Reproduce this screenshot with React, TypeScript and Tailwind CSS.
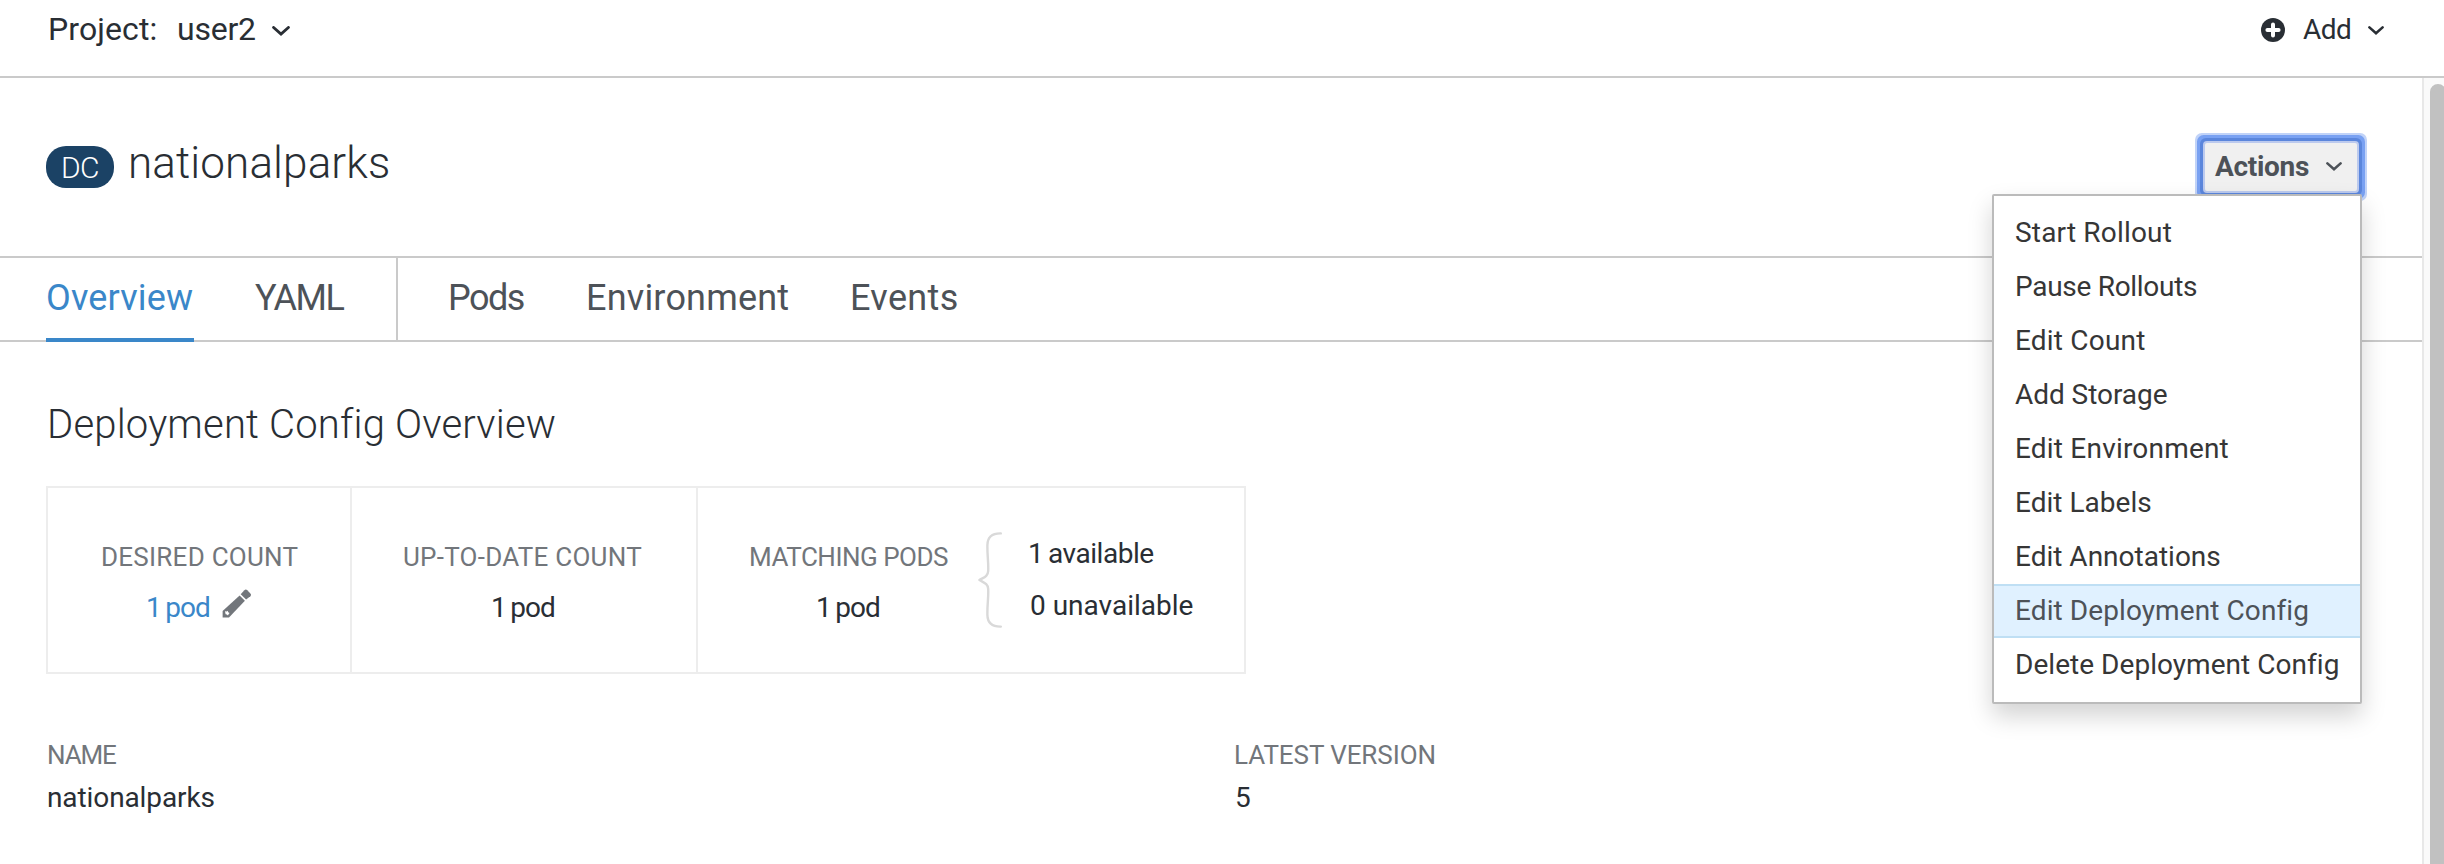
import type { ReactNode } from 'react';

function Chevron({ className }: { className: string }) {
  return (
    <svg viewBox="0 0 18 10" className={className} fill="none" stroke="currentColor" strokeWidth="2.9" strokeLinecap="round" strokeLinejoin="miter">
      <path d="M1.6 1.5 9 8 16.4 1.5" />
    </svg>
  );
}

function PlusCircle() {
  return (
    <svg viewBox="0 0 24 24" className="mt-[18px] h-6 w-6">
      <circle cx="12" cy="12" r="12" fill="#292e34" />
      <path d="M12 6.4v11.2M6.4 12h11.2" stroke="#fff" strokeWidth="4" strokeLinecap="round" />
    </svg>
  );
}

function Pencil() {
  return (
    <svg viewBox="0 0 29 29" className="mt-[1px] h-[29px] w-[29px]" fill="#72767b">
      <path d="M17.6 6.6 22.9 11.7 7 28.6H.6V22Z" />
      <path d="M18.7 5.3 22.4 1.3q1.4-1.4 2.9 0L28.4 4.4q1.2 1.4 0 2.9L24.1 10.6Z" />
      <path d="M3 22.2 4.8 22.6 5.7 21.8 6.2 23.2 7.6 24 6.6 25.2 6 26.6 4.8 25.6 3.6 25.2Z" fill="#fff" />
    </svg>
  );
}

function Brace() {
  return (
    <svg viewBox="0 0 24 96" className="mt-11 h-24 w-6" fill="none" stroke="#d9d9d9" strokeWidth="2.4" strokeLinecap="round" strokeLinejoin="round">
      <path d="M22.8 1.4C14 1.2 9.6 4.5 9.4 13C9.2 25 10.6 29 10.2 39C10 44.5 5.5 45.5 1.4 48C5.5 50.5 10 51.5 10.2 57C10.6 67 9.2 71 9.4 83C9.6 91.5 14 94.8 22.8 94.6" />
    </svg>
  );
}

const menuItems = [
  { label: 'Start Rollout', tracking: 'tracking-[0.18px]' },
  { label: 'Pause Rollouts', tracking: 'tracking-[-0.29px]' },
  { label: 'Edit Count', tracking: 'tracking-[0.2px]' },
  { label: 'Add Storage', tracking: 'tracking-[-0.05px]' },
  { label: 'Edit Environment', tracking: 'tracking-[0.2px]' },
  { label: 'Edit Labels', tracking: 'tracking-[0.02px]' },
  { label: 'Edit Annotations', tracking: 'tracking-normal' },
  { label: 'Edit Deployment Config', tracking: 'tracking-[0.09px]', active: true },
  { label: 'Delete Deployment Config', tracking: 'tracking-[0.04px]' },
];

function ActionsMenu() {
  return (
    <ul className="absolute top-[51px] -right-[5px] z-10 h-[510px] w-[370px] rounded-[2px] border-2 border-[#bbbbbb] bg-white py-[10px] shadow-[0_12px_24px_rgba(0,0,0,0.175)]">
      {menuItems.map((item) => (
        <li
          key={item.label}
          className={`h-[54px] border-y-2 pl-[21px] text-[28px] leading-[49px] whitespace-nowrap ${item.tracking} ${
            item.active ? 'border-[#bfdff4] bg-[#e0f1ff] text-[#4d5258]' : 'border-transparent text-[#363636]'
          }`}
        >
          {item.label}
        </li>
      ))}
    </ul>
  );
}

function Label({ children, className }: { children: ReactNode; className: string }) {
  return <div className={`text-[26px] leading-10 whitespace-nowrap text-[#72767b] ${className}`}>{children}</div>;
}

function PodCount({ className }: { className: string }) {
  return (
    <span className={`text-[28px] leading-10 tracking-[-1px] whitespace-nowrap [word-spacing:-1.4px] ${className}`}>1 pod</span>
  );
}

export default function App() {
  return (
    <div className="flex h-[864px] w-[2444px] flex-col overflow-hidden bg-white font-['Roboto',sans-serif] text-[#292e34]">
      <header className="flex h-[78px] shrink-0 items-start justify-between border-b-2 border-[#cacaca] pr-[60px] pl-12">
        <div className="flex text-[32px] leading-[58px]">
          <span className="w-[129px] tracking-[0.1px]">Project:</span>
          <span className="w-[95px] tracking-[-0.24px]">user2</span>
          <Chevron className="mt-[26px] h-[10px] w-[18px]" />
        </div>
        <div className="flex text-[28px] leading-[60px]">
          <PlusCircle />
          <span className="ml-[18px] w-[65px] tracking-[-0.53px]">Add</span>
          <Chevron className="mt-[26px] h-[9px] w-4" />
        </div>
      </header>

      <div className="flex min-h-0 flex-1">
        <main className="w-[2422px] shrink-0">
          <div className="flex h-[178px] items-start pt-16 pr-[65px] pl-[46px]">
            <span className="mt-1 h-[42px] w-[68px] rounded-[20px] bg-[#1b4265] text-center text-[30px] leading-[43px] font-light tracking-[-0.66px] text-white">
              DC
            </span>
            <h1 className="ml-[14px] text-[44px] leading-[42px] font-light tracking-[0.12px]">nationalparks</h1>
            <div className="relative mt-px ml-auto">
              <button className="flex h-12 w-[152px] rounded-[2px] bg-[#f0f0f0] pl-[10px] text-[28px] leading-[47px] font-bold tracking-[-0.3px] text-[#4d5258] shadow-[0_0_0_2px_#bccaee,0_0_0_5px_#5b86dc,0_0_0_8px_#79a1f2,0_0_0_10px_#c1d3f8]">
                <span className="w-[111px] text-left">Actions</span>
                <Chevron className="mt-[19px] h-[9px] w-4" />
              </button>
              <ActionsMenu />
            </div>
          </div>

          <nav className="flex h-[86px] border-y-2 border-[#cacaca] pl-[46px] text-[36px] leading-[80px] text-[#4d5258]">
            <div className="flex w-[352px] border-r-2 border-[#cacaca]">
              <a className="h-[84px] w-[148px] border-b-4 border-[#3a87c9] tracking-[0.16px] text-[#3a87c9]">Overview</a>
              <a className="ml-[61px] tracking-[-1.5px]">YAML</a>
            </div>
            <a className="ml-[50px] w-[138px] tracking-[-1.5px]">Pods</a>
            <a className="w-[264px] tracking-[0.2px]">Environment</a>
            <a className="tracking-[0.35px]">Events</a>
          </nav>

          <section className="px-[46px] pt-[58px]">
            <h2 className="pl-px text-[40px] leading-[50px] font-light tracking-[0.19px]">Deployment Config Overview</h2>

            <div className="mt-9 flex h-[188px] w-[1200px] border-2 border-[#ededed]">
              <div className="w-[304px] border-r-2 border-[#ededed] pt-[49px]">
                <Label className="pl-[53px] tracking-[0.25px]">DESIRED COUNT</Label>
                <div className="mt-[11px] flex pl-[98px]">
                  <PodCount className="w-[76px] text-[#3a87c9]" />
                  <Pencil />
                </div>
              </div>
              <div className="w-[346px] border-r-2 border-[#ededed] pt-[49px]">
                <Label className="pl-[51px] tracking-[0.25px]">UP-TO-DATE COUNT</Label>
                <div className="mt-[11px] flex pl-[139px]">
                  <PodCount className="" />
                </div>
              </div>
              <div className="flex flex-1">
                <div className="w-[280px] pt-[49px]">
                  <Label className="pl-[51px] tracking-[-0.5px]">MATCHING PODS</Label>
                  <div className="mt-[11px] flex pl-[118px]">
                    <PodCount className="" />
                  </div>
                </div>
                <Brace />
                <div className="ml-[26px] pt-10 text-[28px] leading-[52px] whitespace-nowrap">
                  <div className="tracking-[-0.45px] [word-spacing:-1.8px]">1 available</div>
                  <div className="pl-[2px]">0 unavailable</div>
                </div>
              </div>
            </div>

            <dl className="mt-[61px] flex">
              <div className="w-[1188px]">
                <Label className="pl-px tracking-[-1.15px]">NAME</Label>
                <dd className="mt-[3px] pl-px text-[28px] leading-10 tracking-[-0.1px]">nationalparks</dd>
              </div>
              <div>
                <Label className="tracking-[-0.08px]">LATEST VERSION</Label>
                <dd className="mt-[3px] pl-px text-[28px] leading-10">5</dd>
              </div>
            </dl>
          </section>
        </main>

        <div className="w-[22px] shrink-0 overflow-hidden border-l-2 border-[#e8e8e8] bg-[#fafafa] pt-[6px] pl-[6px]">
          <div className="h-[900px] w-4 rounded-[8px] bg-[#c1c1c1]" />
        </div>
      </div>
    </div>
  );
}
